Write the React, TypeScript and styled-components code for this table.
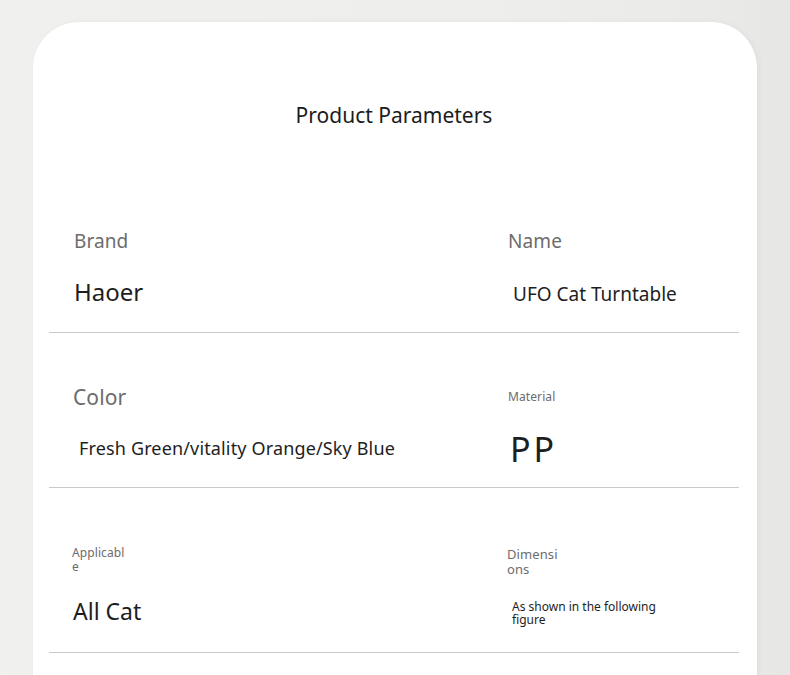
import React from "react";
import styled, { createGlobalStyle } from "styled-components";

const Global = createGlobalStyle`
  html, body { margin: 0; padding: 0; }
  body {
    width: 790px;
    height: 675px;
    overflow: hidden;
    background: linear-gradient(90deg, #f0f0ee 0%, #eeeeec 60%, #eaeae8 90%, #e6e6e4 100%);
    font-family: "Noto Sans", "Open Sans", sans-serif;
  }
`;

const Page = styled.div`
  padding: 22px 33px 0 33px;
  height: 675px;
  box-sizing: border-box;
  overflow: hidden;
`;

const Card = styled.div`
  background: #ffffff;
  border-radius: 46px 46px 0 0;
  height: 100%;
  padding: 0 18px 0 16px;
  box-shadow: 2px 0 6px rgba(0, 0, 0, 0.04);
`;

const Title = styled.h1`
  margin: 0;
  height: 156px;
  padding-top: 78px;
  box-sizing: border-box;
  text-align: center;
  font-family: "Noto Sans", sans-serif;
  font-weight: 400;
  font-size: 21px;
  line-height: 30px;
  color: #1c1c1c;
`;

const Row = styled.div<{ $h: number; $pt: number }>`
  display: grid;
  grid-template-columns: 459px 1fr;
  height: ${(p) => p.$h}px;
  padding-top: ${(p) => p.$pt}px;
  box-sizing: border-box;
  border-bottom: 1px solid #c9c9c9;
`;

const Cell = styled.div<{ $left?: boolean; $dy?: number }>`
  display: flex;
  flex-direction: column;
  padding-left: ${(p) => (p.$left ? 24 : 0)}px;
  padding-top: ${(p) => p.$dy ?? 0}px;
`;

const Label = styled.div<{ $size: number; $w?: number; $lh?: number; $dx?: number }>`
  height: 40px;
  display: flex;
  align-items: center;
  margin-left: ${(p) => p.$dx ?? 0}px;
  span {
    display: block;
    width: ${(p) => (p.$w ? `${p.$w}px` : "auto")};
    font-size: ${(p) => p.$size}px;
    line-height: ${(p) => p.$lh ?? 24}px;
    color: #6c6c6c;
    word-break: break-all;
    letter-spacing: 0.1px;
  }
`;

const Value = styled.div<{ $size: number; $dx: number; $dy?: number; $w?: number; $lh?: number; $ls?: number }>`
  height: 40px;
  margin-top: ${(p) => 11 + (p.$dy ?? 0)}px;
  display: flex;
  align-items: center;
  padding-left: ${(p) => p.$dx}px;
  span {
    display: block;
    width: ${(p) => (p.$w ? `${p.$w}px` : "auto")};
    font-size: ${(p) => p.$size}px;
    line-height: ${(p) => p.$lh ?? 30}px;
    letter-spacing: ${(p) => p.$ls ?? 0}px;
    color: #1e1e1e;
  }
`;

export default function App() {
  return (
    <>
      <Global />
      <Page>
        <Card>
          <Title>Product Parameters</Title>
          <Row $h={155} $pt={43}>
            <Cell $left>
              <Label $size={19} $dx={1}><span>Brand</span></Label>
              <Value $size={24} $dx={1}><span>Haoer</span></Value>
            </Cell>
            <Cell>
              <Label $size={19} $dx={0}><span>Name</span></Label>
              <Value $size={19} $dx={5} $dy={2}><span>UFO Cat Turntable</span></Value>
            </Cell>
          </Row>
          <Row $h={155} $pt={44}>
            <Cell $left>
              <Label $size={21}><span>Color</span></Label>
              <Value $size={18} $dx={6} $ls={0.15}><span>Fresh Green/vitality Orange/Sky Blue</span></Value>
            </Cell>
            <Cell>
              <Label $size={12}><span>Material</span></Label>
              <Value $size={34} $dx={2} $dy={1} $ls={3}><span>PP</span></Value>
            </Cell>
          </Row>
          <Row $h={165} $pt={52}>
            <Cell $left>
              <Label $size={12} $w={56} $lh={14} $dx={-1}><span>Applicable</span></Label>
              <Value $size={23} $dx={0}><span>All Cat</span></Value>
            </Cell>
            <Cell $dy={2}>
              <Label $size={13} $w={52} $lh={15} $dx={-1}><span>Dimensions</span></Label>
              <Value $size={12} $dx={4} $w={150} $lh={13} $dy={0}><span>As shown in the following figure</span></Value>
            </Cell>
          </Row>
        </Card>
      </Page>
    </>
  );
}
